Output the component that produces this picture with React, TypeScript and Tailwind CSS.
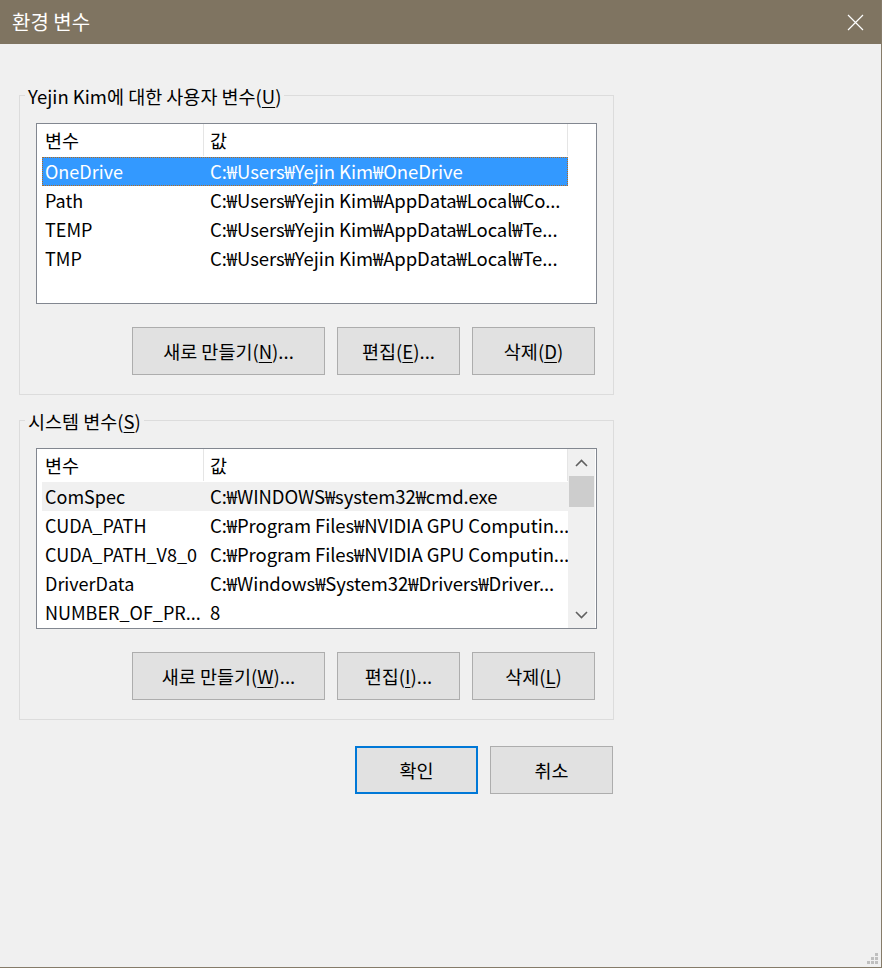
import type { ReactNode } from "react"

type Row = { name: string; value: string }

const userRows: Row[] = [
  { name: "OneDrive", value: "C:₩Users₩Yejin Kim₩OneDrive" },
  { name: "Path", value: "C:₩Users₩Yejin Kim₩AppData₩Local₩Co..." },
  { name: "TEMP", value: "C:₩Users₩Yejin Kim₩AppData₩Local₩Te..." },
  { name: "TMP", value: "C:₩Users₩Yejin Kim₩AppData₩Local₩Te..." },
]

const systemRows: Row[] = [
  { name: "ComSpec", value: "C:₩WINDOWS₩system32₩cmd.exe" },
  { name: "CUDA_PATH", value: "C:₩Program Files₩NVIDIA GPU Computin..." },
  { name: "CUDA_PATH_V8_0", value: "C:₩Program Files₩NVIDIA GPU Computin..." },
  { name: "DriverData", value: "C:₩Windows₩System32₩Drivers₩Driver..." },
  { name: "NUMBER_OF_PR...", value: "8" },
]

function Key({ k }: { k: string }) {
  return (
    <>
      (<span className="underline underline-offset-[3px]">{k}</span>)
    </>
  )
}

function Button({
  children,
  width,
  primary,
}: {
  children: ReactNode
  width: string
  primary?: boolean
}) {
  return (
    <button
      className={
        width +
        " flex h-[48px] items-center justify-center bg-[#e1e1e1] text-[18.5px] leading-none text-black " +
        (primary ? "border-2 border-[#0078d7]" : "border border-[#adadad]")
      }
    >
      {children}
    </button>
  )
}

function Chevron({ up }: { up?: boolean }) {
  return (
    <svg width="13" height="8" viewBox="0 0 13 8" className="text-[#606060]">
      <path
        d={up ? "M1 7 L6.5 1.5 L12 7" : "M1 1 L6.5 6.5 L12 1"}
        fill="none"
        stroke="currentColor"
        strokeWidth="1.6"
      />
    </svg>
  )
}

function ListView({
  rows,
  selected,
  hot,
  scrollbar,
}: {
  rows: Row[]
  selected?: number
  hot?: number
  scrollbar?: boolean
}) {
  return (
    <div className="flex h-[181px] w-[561px] border border-[#828790] bg-white">
      <div className="flex w-[531px] shrink-0 flex-col">
        <div className="flex h-[32px] text-[18.5px] leading-[32px]">
          <div className="w-[167px] shrink-0 border-r border-[#e5e5e5] pl-[8px]">변수</div>
          <div className="w-[364px] shrink-0 border-r border-[#e5e5e5] pl-[6px]">값</div>
        </div>
        <div className="flex flex-col pl-[5px] pt-[1px]">
          {rows.map((r, i) => (
            <div
              key={r.name}
              className={
                "flex h-[29px] items-center overflow-hidden text-[18.5px] leading-[29px] " +
                (i === selected
                  ? "border border-dotted border-[#b46a1e] bg-[#3399ff] text-white"
                  : i === hot
                    ? "bg-[#f0f0f0] text-black"
                    : "text-black")
              }
            >
              <div
                className={
                  (i === selected ? "w-[161px] pl-[2px]" : "w-[162px] pl-[3px]") +
                  " shrink-0 overflow-hidden whitespace-nowrap text-[18px]"
                }
              >
                {r.name}
              </div>
              <div className="shrink-0 whitespace-nowrap pl-[6px] tracking-[-0.08px]">{r.value}</div>
            </div>
          ))}
        </div>
      </div>
      {scrollbar ? (
        <div className="flex w-[27px] flex-col items-center bg-[#f0f0f0] pt-[1px]">
          <div className="flex h-[26px] items-center justify-center">
            <Chevron up />
          </div>
          <div className="h-[31px] w-[25px] bg-[#cdcdcd]" />
          <div className="flex-1" />
          <div className="flex h-[26px] items-center justify-center">
            <Chevron />
          </div>
        </div>
      ) : null}
    </div>
  )
}

function GroupBox({ label, children }: { label: ReactNode; children: ReactNode }) {
  return (
    <div className="relative h-[300px] w-[595px] border border-[#dcdcdc] pl-[16px] pt-[27px]">
      <div className="absolute -top-[12px] left-[5px] bg-[#f0f0f0] px-[3px] text-[18.5px] leading-[24px] text-black">
        {label}
      </div>
      {children}
    </div>
  )
}

export default function App() {
  return (
    <div className="flex h-[968px] w-[882px] flex-col border-b border-r border-[#857b69] bg-[#f0f0f0] font-['Noto_Sans_CJK_KR',sans-serif]">
      <div className="flex h-[44px] shrink-0 items-center justify-between bg-[#7f7461] pl-[12px] pr-[17px]">
        <span className="text-[20px] leading-none text-white">환경 변수</span>
        <svg width="17" height="17" viewBox="0 0 17 17">
          <path d="M1 1 L16 16 M16 1 L1 16" stroke="white" strokeWidth="1.2" />
        </svg>
      </div>

      <div className="flex flex-col pl-[19px] pt-[51px]">
        <GroupBox
          label={
            <>
              Yejin Kim에 대한 사용자 변수<Key k="U" />
            </>
          }
        >
          <ListView rows={userRows} selected={0} />
          <div className="mt-[23px] flex w-[561px] justify-end gap-[12px] pr-[2px]">
            <Button width="w-[193px]">
              새로 만들기<Key k="N" />...
            </Button>
            <Button width="w-[123px]">
              편집<Key k="E" />...
            </Button>
            <Button width="w-[123px]">
              삭제<Key k="D" />
            </Button>
          </div>
        </GroupBox>

        <div className="mt-[25px]">
          <GroupBox
            label={
              <>
                시스템 변수<Key k="S" />
              </>
            }
          >
            <ListView rows={systemRows} hot={0} scrollbar />
            <div className="mt-[23px] flex w-[561px] justify-end gap-[12px] pr-[2px]">
              <Button width="w-[193px]">
                새로 만들기<Key k="W" />...
              </Button>
              <Button width="w-[123px]">
                편집<Key k="I" />...
              </Button>
              <Button width="w-[123px]">
                삭제<Key k="L" />
              </Button>
            </div>
          </GroupBox>
        </div>

        <div className="mt-[26px] flex w-[594px] justify-end gap-[12px]">
          <Button width="w-[123px]" primary>
            확인
          </Button>
          <Button width="w-[123px]">취소</Button>
        </div>
      </div>

      <div className="mt-auto flex justify-end pb-[3px] pr-[3px]">
        <div className="grid grid-cols-3 gap-[1px]">
          <span className="h-[3px] w-[3px]" />
          <span className="h-[3px] w-[3px]" />
          <span className="h-[3px] w-[3px] bg-[#bfbfbf]" />
          <span className="h-[3px] w-[3px]" />
          <span className="h-[3px] w-[3px] bg-[#bfbfbf]" />
          <span className="h-[3px] w-[3px] bg-[#bfbfbf]" />
          <span className="h-[3px] w-[3px] bg-[#bfbfbf]" />
          <span className="h-[3px] w-[3px] bg-[#bfbfbf]" />
          <span className="h-[3px] w-[3px] bg-[#bfbfbf]" />
        </div>
      </div>
    </div>
  )
}
